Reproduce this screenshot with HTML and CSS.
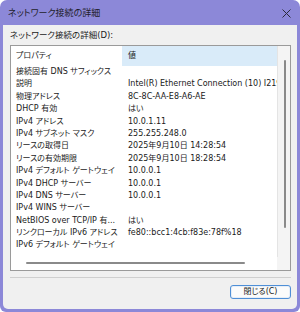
FILE: index.html
```html
<!DOCTYPE html>
<html lang="ja">
<head>
<meta charset="utf-8">
<title>ネットワーク接続の詳細</title>
<link rel="stylesheet" href="styles.css">
</head>
<body>
<div class="window">
  <div class="titlebar">
    <span class="title">ネットワーク接続の詳細</span>
    <svg class="close" width="9" height="9" viewBox="0 0 9 9"><path d="M0.5 0.5L8.5 8.5M8.5 0.5L0.5 8.5" stroke="#2a2a3a" stroke-width="1" fill="none"/></svg>
  </div>
  <div class="body">
    <div class="label">ネットワーク接続の詳細(D):</div>
    <div class="listbox">
      <div class="content">
        <div class="head">
          <div class="hname">プロパティ</div>
          <div class="hval">値</div>
        </div>
        <div class="rows">
          <div class="row"><span class="n">接続固有 DNS サフィックス</span><span class="v"></span></div>
          <div class="row"><span class="n">説明</span><span class="v">Intel(R) Ethernet Connection (10) I219-V</span></div>
          <div class="row"><span class="n">物理アドレス</span><span class="v">8C-8C-AA-E8-A6-AE</span></div>
          <div class="row"><span class="n">DHCP 有効</span><span class="v">はい</span></div>
          <div class="row"><span class="n">IPv4 アドレス</span><span class="v">10.0.1.11</span></div>
          <div class="row"><span class="n">IPv4 サブネット マスク</span><span class="v">255.255.248.0</span></div>
          <div class="row"><span class="n">リースの取得日</span><span class="v">2025年9月10日 14:28:54</span></div>
          <div class="row"><span class="n">リースの有効期限</span><span class="v">2025年9月10日 18:28:54</span></div>
          <div class="row"><span class="n">IPv4 デフォルト ゲートウェイ</span><span class="v">10.0.0.1</span></div>
          <div class="row"><span class="n">IPv4 DHCP サーバー</span><span class="v">10.0.0.1</span></div>
          <div class="row"><span class="n">IPv4 DNS サーバー</span><span class="v">10.0.0.1</span></div>
          <div class="row"><span class="n">IPv4 WINS サーバー</span><span class="v"></span></div>
          <div class="row"><span class="n" title="NetBIOS over TCP/IP 有効">NetBIOS over TCP/IP 有...</span><span class="v">はい</span></div>
          <div class="row"><span class="n">リンクローカル IPv6 アドレス</span><span class="v">fe80::bcc1:4cb:f83e:78f%18</span></div>
          <div class="row"><span class="n">IPv6 デフォルト ゲートウェイ</span><span class="v"></span></div>
        </div>
      </div>
      <div class="vscroll"><div class="vthumb"></div></div>
      <div class="hscroll"><div class="hthumb"></div></div>
      <div class="corner"></div>
    </div>
    <div class="sep"></div>
    <div class="actions">
      <button class="btn">閉じる(C)</button>
    </div>
  </div>
</div>
</body>
</html>
```
FILE: styles.css
```css
html, body {
  margin: 0;
  padding: 0;
  background: #ffffff;
}
body {
  width: 300px;
  height: 312px;
  overflow: hidden;
  font-family: "DejaVu Sans", "Noto Sans CJK JP", sans-serif;
  font-feature-settings: "palt";
  color: #1a1a1a;
}
.window {
  width: 300px;
  height: 312px;
  box-sizing: border-box;
  background: #8c88d8;
  border-radius: 7px 7px 6px 6px;
  padding: 0 3px 3px 3px;
  display: flex;
  flex-direction: column;
}
.titlebar {
  height: 25px;
  flex: none;
  display: flex;
  align-items: center;
  justify-content: space-between;
  padding: 0 6px 0 5px;
  font-family: "Noto Sans CJK JP", sans-serif;
  font-size: 9px;
  color: #1e1e2a;
}
.close {
  display: block;
  margin-top: 1px;
}
.body {
  flex: 1;
  background: #f0f0f0;
  border-radius: 0 0 5px 5px;
  padding: 0 6px 0 7px;
  display: flex;
  flex-direction: column;
}
.label {
  height: 20px;
  line-height: 20px;
  font-size: 8.5px;
}
.listbox {
  height: 226px;
  box-sizing: border-box;
  border: 1px solid #9a9a9a;
  background: #ffffff;
  display: grid;
  grid-template-columns: 1fr 13px;
  grid-template-rows: 1fr 13px;
  font-size: 8px;
}
.content {
  overflow: hidden;
  display: flex;
  flex-direction: column;
}
.head {
  height: 20px;
  flex: none;
  display: flex;
}
.hname {
  width: 111px;
  flex: none;
  padding-left: 5px;
  box-sizing: border-box;
  line-height: 19px;
}
.hval {
  flex: 1;
  background: #d9ebf9;
  padding-left: 6px;
  line-height: 19px;
}
.rows {
  display: flex;
  flex-direction: column;
}
.row {
  height: 12.4px;
  line-height: 12.4px;
  display: flex;
  white-space: nowrap;
}
.n {
  width: 111px;
  flex: none;
  padding: 0 1px 0 5px;
  box-sizing: border-box;
  overflow: hidden;
  text-overflow: ellipsis;
}
.v {
  padding-left: 6px;
}
.vscroll {
  background: #f4f4f4;
  border-left: 1px solid #e4e4e4;
  display: flex;
  justify-content: center;
  padding-top: 14px;
}
.vthumb {
  width: 2px;
  height: 168px;
  background: #8a8a8a;
  border-radius: 1px;
  margin-left: 1px;
}
.hscroll {
  background: #ffffff;
  padding: 5px 0 0 15px;
}
.hthumb {
  width: 219px;
  height: 2px;
  background: #8a8a8a;
  border-radius: 1px;
}
.corner {
  background: #f4f4f4;
}
.sep {
  height: 1px;
  background: #cfcfcf;
  margin-top: 6px;
  flex: none;
}
.actions {
  display: flex;
  justify-content: flex-end;
  margin-top: 7px;
}
.btn {
  width: 61px;
  height: 14px;
  box-sizing: border-box;
  border: 1px solid #4f8fd6;
  border-radius: 3px;
  background: #fbfbfb;
  box-shadow: inset 0 0 0 1px #e6eef8;
  font-family: "DejaVu Sans", "Noto Sans CJK JP", sans-serif;
  font-feature-settings: "palt";
  font-size: 8px;
  line-height: 12px;
  padding: 0;
  color: #1a1a1a;
}
```
